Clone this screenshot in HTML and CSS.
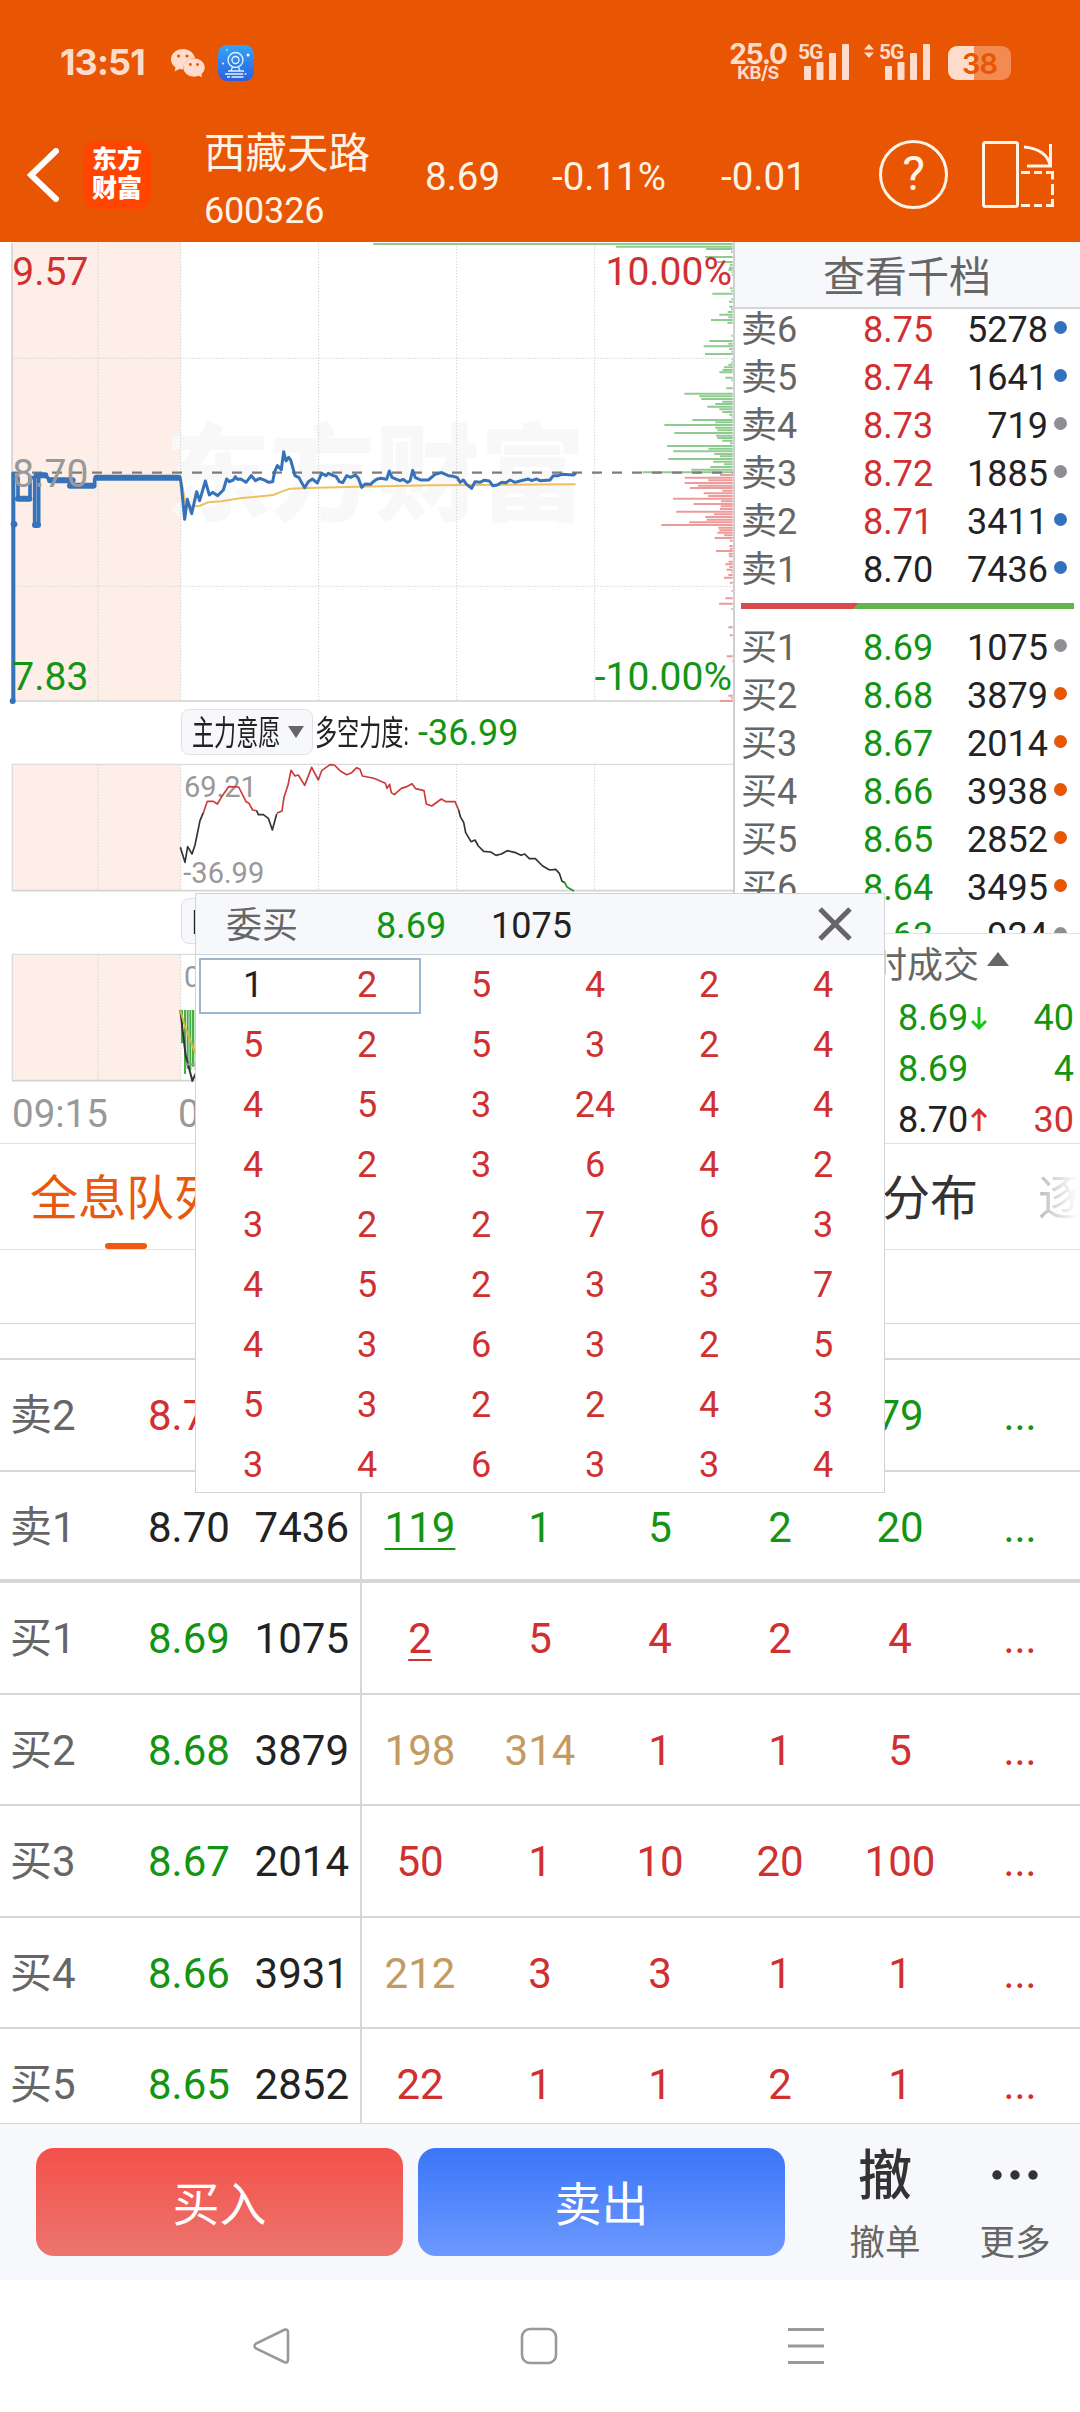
FILE: index.html
```html
<!DOCTYPE html>
<html lang="zh-CN">
<head>
    <meta charset="UTF-8">
    <meta name="viewport" content="width=device-width, initial-scale=1.0">
    <title>西藏天路 600326</title>
    <link rel="stylesheet" href="styles.css">
</head>
<body>
<div class="page">

    <!-- Status bar -->
    <div class="status-bar">
        <span class="clock">13:51</span>
        <svg class="wechat" viewBox="0 0 34 28" width="34" height="28">
            <path fill="#fddccb" d="M12 0C5.4 0 0 4.7 0 10.4c0 3.3 1.8 6 4.5 8L3.6 22.600l4.700-2.500c1.300.300 2.400.500 3.700.500C12 14 17 9 24 9 22.800 3.800 17.900 0 12 0z"/>
            <ellipse cx="23" cy="18.500" rx="10.800" ry="9.200" fill="#fddccb"/>
            <path fill="#fddccb" d="M26 26l5 2.200-.900-4.500z"/>
            <g fill="#e85503"><circle cx="7.600" cy="7" r="1.600"/><circle cx="16" cy="7" r="1.600"/><circle cx="19.400" cy="15.500" r="1.400"/><circle cx="26.600" cy="15.500" r="1.400"/></g>
        </svg>
        <svg class="cam" viewBox="0 0 36 36" width="36" height="36">
            <defs><linearGradient id="camBg" x1="0" y1="0" x2="0" y2="1"><stop offset="0" stop-color="#35a5f5"/><stop offset="1" stop-color="#2b5fe0"/></linearGradient></defs>
            <rect width="36" height="36" rx="9" fill="url(#camBg)"/>
            <g fill="none" stroke="#e6f3ff" stroke-width="1.300"><circle cx="17.500" cy="15" r="7.500"/><circle cx="17.500" cy="15" r="3.500"/><path d="M14.500 22l-1.500 4h9l-1.500-4M10 26h16M7 29h18M26.500 29h2M9 32h3M13.500 32h12"/></g>
            <g fill="#fff"><circle cx="30" cy="10" r="1.500"/><circle cx="9" cy="5" r=".8"/><circle cx="5" cy="18.500" r=".9"/></g>
        </svg>
        <div class="net-speed"><b>25.0</b><small>KB/S</small></div>
        <div class="signal">
            <span>5G</span>
            <svg viewBox="0 0 46 36" width="46" height="36"><g fill="#fddccb"><rect x="0" y="22" width="7" height="14" rx="1"/><rect x="12.500" y="18" width="7" height="18" rx="1"/><rect x="25" y="9" width="7" height="27" rx="1"/><rect x="38" y="0" width="7" height="36" rx="1"/></g></svg>
        </div>
        <svg class="updown" viewBox="0 0 10 14" width="10" height="14"><path fill="#fddccb" d="M5 0l5 5.500H0zM5 14L0 8.500h10z"/></svg>
        <div class="signal second">
            <span>5G</span>
            <svg viewBox="0 0 46 36" width="46" height="36"><g fill="#fddccb"><rect x="0" y="22" width="7" height="14" rx="1"/><rect x="12.500" y="18" width="7" height="18" rx="1"/><rect x="25" y="9" width="7" height="27" rx="1"/><rect x="38" y="0" width="7" height="36" rx="1"/></g></svg>
        </div>
        <div class="battery">38</div>
    </div>

    <!-- Title bar -->
    <div class="title-bar">
        <svg class="back" viewBox="0 0 32 54" width="32" height="54"><path d="M29 3L4 27l25 24" fill="none" stroke="#fff" stroke-width="6" stroke-linecap="round"/></svg>
        <div class="brand">东方<br>财富</div>
        <div class="stock">
            <div class="stock-name">西藏天路</div>
            <div class="stock-code">600326</div>
        </div>
        <span class="quote price">8.69</span>
        <span class="quote percent">-0.11%</span>
        <span class="quote change">-0.01</span>
        <div class="help">?</div>
        <svg class="rotate" viewBox="0 0 74 68" width="74" height="68">
            <g fill="none" stroke="#fff3e6" stroke-width="3">
                <rect x="1.500" y="1.500" width="34" height="64" rx="2"/>
                <path d="M42 6c14 1 25 8 26 19M68.500 3v22H45"/>
                <path d="M39 31.500h9M52 31.500h8M64 31.500h6.500v7M70.500 43v11M70.500 58v6.500H64M60 64.500h-8M48 64.500h-9"/>
            </g>
        </svg>
    </div>

    <div class="main">
        <!-- Charts -->
        <div class="charts">
            <svg class="chart" viewBox="0 21 2202 1386" width="734" height="462">
                <rect x="37" y="21" width="505" height="1376" fill="#fdeee7"/>
                <text class="watermark" x="495" y="830">东方财富</text>
                <g class="grid">
                    <path d="M294 24V1396M542 24V1396M956 24V1396M1370 24V1396M1784 24V1396M37 370H2200M37 1054H2200"/>
                </g>
                <path d="M36 24V1398M36 1398H2202" stroke="#d3d3d5" stroke-width="5" fill="none"/>
                <path id="volUp" stroke="#8fca90" stroke-width="6" fill="none"/>
                <path id="volDown" stroke="#ec9a9a" stroke-width="6" fill="none"/>
                <path d="M36 713H2198" stroke="#7d7d7d" stroke-width="7" stroke-dasharray="30 30" fill="none"/>
                <polyline fill="none" stroke="#efc05f" stroke-width="6" points="545,740 555,800 575,815 600,812 625,802 665,799 720,790 820,780 845,770 870,761 950,758 1140,754 1300,751 1727,748"/>
                <g fill="none" stroke="#3672b9">
                    <path stroke-width="12" d="M40 712V1398"/>
                    <circle cx="38" cy="1398" r="9" fill="#3672b9" stroke="none"/>
                    <circle cx="42" cy="868" r="10" fill="#3672b9" stroke="none"/>
                    <path stroke-width="11" stroke-linejoin="round" d="M46 728H54V790H90V728H104V870H116V720H135L150 736H210V752H284V730"/>
                    <path stroke-width="18" stroke-linecap="round" d="M54 791H88M105 870H114M110 721H136M150 736H218M210 752H280M289 728H536"/>
                    <polyline stroke-width="9" stroke-linejoin="round" points="541,730 545,760 554,853 562,793 575,836 590,770 599,797 616,738 628,780 638,772 653,782 670,765 680,732 688,740 700,735 706,725 712,733 722,732 738,742 754,722 766,737 780,730 795,736 806,742 818,740 824,710 832,692 844,704 851,650 858,678 866,667 872,675 885,722 897,728 906,745 914,758 925,740 937,732 952,744 965,715 978,722 985,715 1000,722 1008,724 1018,740 1028,743 1040,722 1052,727 1066,720 1075,730 1085,757 1095,747 1112,748 1120,740 1130,733 1143,730 1160,733 1168,708 1176,727 1190,733 1200,737 1210,733 1222,742 1230,738 1238,706 1246,728 1262,735 1285,735 1305,718 1325,713 1345,722 1360,724 1372,728 1380,742 1390,735 1400,748 1415,760 1425,740 1440,742 1452,736 1468,738 1478,752 1492,750 1505,742 1518,743 1530,735 1545,742 1560,738 1585,732 1595,737 1610,732 1620,737 1650,735 1660,722 1675,722 1685,718 1720,720 1728,715"/>
                </g>
                <text class="axis-text up" x="37" y="150">9.57</text>
                <text class="axis-text up" x="2196" y="150" text-anchor="end">10.00%</text>
                <text class="axis-text mid" x="37" y="756">8.70</text>
                <text class="axis-text down" x="37" y="1365">7.83</text>
                <text class="axis-text down" x="2196" y="1365" text-anchor="end">-10.00%</text>
            </svg>

            <div class="legend">
                <div class="picker"><span class="narrow">主力意愿</span><i></i></div>
                <span class="narrow force">多空力度:</span>
                <span class="force-value">-36.99</span>
            </div>

            <svg class="chart" viewBox="0 210 2202 396" width="734" height="132">
                <rect x="37" y="223" width="505" height="378" fill="#fdeee7"/>
                <g class="grid"><path d="M294 224V602M542 224V602M956 224V602M1370 224V602M1784 224V602"/></g>
                <path d="M2202 223H37V603" stroke="#dcdcde" stroke-width="4" fill="none"/>
                <path d="M36 602H2202" stroke="#d3d3d5" stroke-width="5" fill="none"/>
                <text class="small-text" x="552" y="320">69.21</text>
                <text class="small-text" x="550" y="578">-36.99</text>
                <g fill="none" stroke-width="5" stroke-linejoin="round">
                    <polyline stroke="#333" points="541,472 555,517 563,470 576,492 585,465 600,392 610,368"/>
                    <polyline stroke="#cb3b3b" points="610,368 622,334 640,334 652,342 664,322 686,290 716,291 738,335 747,340 758,360 770,362"/>
                    <polyline stroke="#333" points="770,362 775,374 790,374 805,385 817,420 830,372"/>
                    <polyline stroke="#cb3b3b" points="830,370 846,363 852,322 864,285 873,241 885,258 895,255 914,286 935,232 955,270 965,242 990,224 1003,225 1020,242 1040,254 1055,248 1070,233 1080,238 1087,258 1118,264 1129,268 1156,280 1161,295 1169,283 1174,308 1183,314 1204,295 1220,290 1236,281 1247,296 1272,302 1279,342 1295,348 1324,327 1338,335 1365,335 1376,360"/>
                    <polyline stroke="#333" points="1376,360 1381,380 1391,397 1397,428 1413,455 1425,450 1435,468 1451,484 1472,486 1488,496 1504,492 1522,482 1547,488 1563,496 1574,492 1588,506 1606,506 1628,528 1649,540 1667,538 1678,550 1686,574 1695,578"/>
                    <polyline stroke="#1c961c" points="1693,576 1702,592 1722,603"/>
                </g>
            </svg>

            <div class="legend second">
                <div class="picker"><span class="narrow">MACD</span></div>
            </div>

            <svg class="chart" viewBox="0 780 2202 396" width="734" height="132">
                <rect x="37" y="793" width="505" height="378" fill="#fdeee7"/>
                <g class="grid"><path d="M294 794V1172M542 794V1172"/></g>
                <path d="M2202 793H37V1173" stroke="#dcdcde" stroke-width="4" fill="none"/>
                <path d="M36 1172H2202" stroke="#d3d3d5" stroke-width="5" fill="none"/>
                <path d="M546 960V1060M555 960V1152M563 960V1136M571 960V1140M579 960V1130M587 960V1140" stroke="#48ae48" stroke-width="6"/>
                <path d="M541 960l8 70 8 66 20 76 12-25" fill="none" stroke="#333" stroke-width="6"/>
                <path d="M541 960l14 50 34 86" fill="none" stroke="#d9b93a" stroke-width="6"/>
                <path d="M556 1123h30" stroke="#999" stroke-width="6"/>
                <text class="small-text" x="552" y="890">0</text>
            </svg>

            <div class="times"><span>09:15</span><span>09:30</span></div>
        </div>

        <!-- Order book -->
        <div class="side">
            <div class="side-head">查看千档</div>
            <div class="book">
                <div class="book-row first"><span>卖6</span><b class="up">8.75</b><em>5278</em><i class="dot blue"></i></div>
                <div class="book-row"><span>卖5</span><b class="up">8.74</b><em>1641</em><i class="dot blue"></i></div>
                <div class="book-row"><span>卖4</span><b class="up">8.73</b><em>719</em><i class="dot"></i></div>
                <div class="book-row"><span>卖3</span><b class="up">8.72</b><em>1885</em><i class="dot"></i></div>
                <div class="book-row"><span>卖2</span><b class="up">8.71</b><em>3411</em><i class="dot blue"></i></div>
                <div class="book-row"><span>卖1</span><b>8.70</b><em>7436</em><i class="dot blue"></i></div>
                <div class="ratio"></div>
                <div class="book-row"><span>买1</span><b class="down">8.69</b><em>1075</em><i class="dot"></i></div>
                <div class="book-row"><span>买2</span><b class="down">8.68</b><em>3879</em><i class="dot orange"></i></div>
                <div class="book-row"><span>买3</span><b class="down">8.67</b><em>2014</em><i class="dot orange"></i></div>
                <div class="book-row"><span>买4</span><b class="down">8.66</b><em>3938</em><i class="dot orange"></i></div>
                <div class="book-row"><span>买5</span><b class="down">8.65</b><em>2852</em><i class="dot orange"></i></div>
                <div class="book-row"><span>买6</span><b class="down">8.64</b><em>3495</em><i class="dot orange"></i></div>
                <div class="book-row"><span></span><b class="down">8.63</b><em>924</em><i class="dot"></i></div>
            </div>
            <div class="deals-head">时成交<i></i></div>
            <div class="deal down"><span>8.69</span><svg viewBox="0 0 16 24" width="16" height="24"><path d="M8 1v21M1 15l7 7 7-7" fill="none" stroke="#15c715" stroke-width="3"/></svg><em>40</em></div>
            <div class="deal down"><span>8.69</span><em>4</em></div>
            <div class="deal up"><span class="flat">8.70</span><svg viewBox="0 0 16 24" width="16" height="24"><path d="M8 23V2M1 9l7-7 7 7" fill="none" stroke="#dd2c2c" stroke-width="3"/></svg><em>30</em></div>
        </div>
    </div>

    <!-- Tabs -->
    <div class="tabs">
        <span class="tab active">全息队列</span>
        <span class="tab spread">分布</span>
        <span class="tab fade">逐</span>
    </div>
    <div class="blank"></div>
    <div class="blank short"></div>

    <!-- Order queue -->
    <div class="queue">
        <div class="queue-row sell">
            <div class="level"><span>卖2</span><b class="up">8.71</b><em>3411</em></div>
            <div class="cells"><span></span><span></span><span></span><span></span><span>79</span><span>...</span></div>
        </div>
        <div class="queue-row sell last">
            <div class="level"><span>卖1</span><b>8.70</b><em>7436</em></div>
            <div class="cells"><span><u>119</u></span><span>1</span><span>5</span><span>2</span><span>20</span><span>...</span></div>
        </div>
        <div class="queue-row buy">
            <div class="level"><span>买1</span><b class="down">8.69</b><em>1075</em></div>
            <div class="cells"><span><u>2</u></span><span>5</span><span>4</span><span>2</span><span>4</span><span>...</span></div>
        </div>
        <div class="queue-row buy">
            <div class="level"><span>买2</span><b class="down">8.68</b><em>3879</em></div>
            <div class="cells"><span class="big">198</span><span class="big">314</span><span>1</span><span>1</span><span>5</span><span>...</span></div>
        </div>
        <div class="queue-row buy">
            <div class="level"><span>买3</span><b class="down">8.67</b><em>2014</em></div>
            <div class="cells"><span>50</span><span>1</span><span>10</span><span>20</span><span>100</span><span>...</span></div>
        </div>
        <div class="queue-row buy">
            <div class="level"><span>买4</span><b class="down">8.66</b><em>3931</em></div>
            <div class="cells"><span class="big">212</span><span>3</span><span>3</span><span>1</span><span>1</span><span>...</span></div>
        </div>
        <div class="queue-row buy">
            <div class="level"><span>买5</span><b class="down">8.65</b><em>2852</em></div>
            <div class="cells"><span>22</span><span>1</span><span>1</span><span>2</span><span>1</span><span>...</span></div>
        </div>
    </div>

    <!-- Trade bar -->
    <div class="trade-bar">
        <button class="btn buy-btn">买入</button>
        <button class="btn sell-btn">卖出</button>
        <div class="action cancel"><strong>撤</strong><span>撤单</span></div>
        <div class="action more">
            <svg viewBox="0 0 46 54" width="46" height="54"><g fill="#333"><circle cx="5" cy="27" r="4.700"/><circle cx="23" cy="27" r="4.700"/><circle cx="41" cy="27" r="4.700"/></g></svg>
            <span>更多</span>
        </div>
    </div>

    <!-- System navigation -->
    <div class="nav">
        <svg viewBox="0 0 38 38" width="38" height="38"><path d="M33 2.500L4 16.500q-3 2.500 0 5L33 35.500q3 .500 3-3v-27q0-3.500-3-3z" fill="none" stroke="#999" stroke-width="2.600"/></svg>
        <svg viewBox="0 0 38 38" width="38" height="38"><rect x="2" y="2" width="34" height="34" rx="8" fill="none" stroke="#999" stroke-width="2.600"/></svg>
        <svg viewBox="0 0 38 38" width="38" height="38"><path d="M0 2.500h36M0 19h36M0 35.500h36" stroke="#999" stroke-width="3"/></svg>
    </div>

    <!-- Queue detail popup -->
    <div class="popup">
        <div class="popup-head">
            <span>委买</span><b class="down">8.69</b><em>1075</em>
            <svg viewBox="0 0 34 34" width="34" height="34"><path d="M2 2l30 30M32 2L2 32" stroke="#666" stroke-width="5"/></svg>
        </div>
        <div class="popup-grid">
            <span class="mine">1</span><span>2</span><span>5</span><span>4</span><span>2</span><span>4</span>
            <span>5</span><span>2</span><span>5</span><span>3</span><span>2</span><span>4</span>
            <span>4</span><span>5</span><span>3</span><span>24</span><span>4</span><span>4</span>
            <span>4</span><span>2</span><span>3</span><span>6</span><span>4</span><span>2</span>
            <span>3</span><span>2</span><span>2</span><span>7</span><span>6</span><span>3</span>
            <span>4</span><span>5</span><span>2</span><span>3</span><span>3</span><span>7</span>
            <span>4</span><span>3</span><span>6</span><span>3</span><span>2</span><span>5</span>
            <span>5</span><span>3</span><span>2</span><span>2</span><span>4</span><span>3</span>
            <span>3</span><span>4</span><span>6</span><span>3</span><span>3</span><span>4</span>
        </div>
        <div class="selection"></div>
    </div>
</div>

<script>
    // volume by price: [y, bar length]
    const up = [[27,1078],[35,350],[42,80],[50,5],[66,83],[81,48],[90,8],[98,11],[104,13],[112,3],[120,3],[160,8],[168,4],[176,61],
        [192,4],[200,11],[215,10],[223,5],[231,15],[239,40],[247,13],[255,65],[263,16],[302,4],[318,70],[326,13],[334,87],[342,10],
        [350,4],[357,83],[373,3],[382,4],[389,13],[397,26],[405,31],[412,40],[428,22],[436,4],[460,19],[476,145],[484,100],[492,94],
        [500,31],[507,52],[515,76],[523,40],[531,31],[539,10],[547,3],[555,121],[562,52],[570,205],[578,52],[586,46],[594,175],
        [602,50],[609,46],[617,31],[625,8],[633,197],[641,73],[649,178],[657,55],[664,38],[672,193],[680,58],[688,26],[696,67],
        [704,124],[712,270]];
    const down = [[720,38],[728,144],[736,73],[744,144],[752,104],[759,128],[767,31],[775,87],[783,73],[791,179],[799,35],[807,117],
        [814,36],[822,38],[830,169],[838,56],[846,82],[854,78],[862,130],[870,214],[878,43],[886,40],[893,46],[901,26],[909,54],
        [917,8],[933,10],[941,8],[948,50],[956,12],[964,11],[980,12],[988,22],[996,10],[1004,18],[1012,4],[1020,13],[1028,26],
        [1043,8],[1067,4],[1090,22],[1106,41],[1122,4],[1177,13],[1201,9],[1264,18],[1279,2],[1382,13],[1390,5],[1398,38]];
    const bars = list => list.map(([y, len]) => `M2198 ${y}h-${len}`).join('');
    document.getElementById('volUp').setAttribute('d', bars(up));
    document.getElementById('volDown').setAttribute('d', bars(down));
</script>
</body>
</html>
```
FILE: styles.css
```css
* {
    box-sizing: border-box;
}

body {
    margin: 0;
    background: #fff;
    font-family: Roboto, "Noto Sans CJK SC", sans-serif;
    color: #222;
}

b, em, i, u {
    font-weight: normal;
    font-style: normal;
}

.page {
    position: relative;
    width: 1080px;
    height: 2412px;
    overflow: hidden;
}

.up { color: #d03030; }
.down { color: #139513; }

/* status bar */
.status-bar {
    display: flex;
    height: 108px;
    padding: 44px 67px 0 60px;
    background: #e85503;
    color: #fddccb;
    font-family: Inter, sans-serif;
}

.clock {
    width: 111px;
    font-size: 36px;
    font-weight: 700;
    line-height: 36px;
    letter-spacing: -0.9px;
}

.wechat {
    margin-top: 5px;
}

.cam {
    margin: 1px 0 0 13px;
}

.net-speed {
    display: flex;
    flex-direction: column;
    width: 62px;
    margin-left: 473px;
    align-items: center;
}

.net-speed b {
    font-size: 28px;
    font-weight: 700;
    line-height: 20px;
    letter-spacing: -1.2px;
}

.net-speed small {
    font-size: 18px;
    font-weight: 700;
    line-height: 18px;
    letter-spacing: -0.5px;
}

.signal {
    position: relative;
    margin-left: 15px;
}

.signal.second {
    margin-left: 11px;
}

.signal span {
    position: absolute;
    left: -6px;
    top: -1px;
    font: 700 21px/18px Roboto, sans-serif;
    letter-spacing: -1px;
}

.updown {
    margin-left: 14px;
}

.battery {
    width: 63px;
    height: 34px;
    margin: 2px 0 0 17px;
    border-radius: 9px;
    background: linear-gradient(90deg, #fddccb 26px, #f38a52 26px);
    color: #e85503;
    font-size: 29px;
    font-weight: 600;
    line-height: 35px;
    text-align: center;
    letter-spacing: -1px;
}

/* title bar */
.title-bar {
    display: flex;
    height: 134px;
    padding: 0 24px 0 27px;
    background: #e85503;
    color: #fff3e6;
}

.back {
    margin-top: 40px;
}

.brand {
    width: 68px;
    height: 68px;
    margin: 33px 0 0 24px;
    padding-top: 4px;
    border-radius: 14px;
    background: #ff4500;
    color: #fff;
    font-size: 25px;
    font-weight: 900;
    line-height: 29px;
    text-align: center;
}

.stock {
    width: 221px;
    margin: 20px 0 0 53px;
}

.stock-name {
    font-size: 41.5px;
    line-height: 52px;
}

.stock-code {
    font-size: 36px;
    line-height: 40px;
    margin-top: 11px;
    letter-spacing: -0.2px;
}

.quote {
    font-size: 38.5px;
    line-height: 40px;
    margin-top: 49px;
}

.price { width: 127px; }
.percent { width: 169px; }
.change { width: 158px; }

.help {
    width: 69px;
    height: 69px;
    margin-top: 32px;
    border: 3px solid #fff3e6;
    border-radius: 50%;
    font-size: 48px;
    line-height: 62px;
    text-align: center;
}

.rotate {
    margin: 33px 0 0 34px;
}

/* charts */
.main {
    display: flex;
    height: 902px;
    border-bottom: 1px solid #dfe1e3;
}

.charts {
    width: 733px;
}

.chart {
    display: block;
}

.grid path {
    fill: none;
    stroke: #d2d2d2;
    stroke-width: 3;
    stroke-dasharray: 4 5;
}

.watermark {
    font-size: 315px;
    font-weight: 900;
    fill: #f8f8f8;
}

.axis-text {
    font-size: 117px;
}

.axis-text.up { fill: #d03030; }
.axis-text.mid { fill: #999; }
.axis-text.down { fill: #139513; }

.small-text {
    font-size: 87px;
    fill: #999;
}

.legend {
    display: flex;
    align-items: center;
    height: 56px;
    padding-left: 181px;
}

.legend.second {
    height: 58px;
}

.picker {
    display: flex;
    align-items: center;
    width: 132px;
    height: 46px;
    padding-left: 10px;
    border: 1px solid #e0e2e6;
    border-radius: 8px;
    background: #f7f8fb;
}

.picker i {
    border: 8px solid transparent;
    border-top: 12px solid #666;
    border-bottom: 0;
    margin-left: 8px;
}

/* horizontally squeezed captions */
.narrow {
    width: 88px;
    font-size: 34px;
    line-height: 44px;
    padding-top: 2px;
    white-space: nowrap;
    transform: scaleX(0.65);
    transform-origin: left;
}

.force {
    width: 101px;
    margin-left: 2px;
}

.force-value {
    margin-left: 2px;
    padding-top: 2px;
    font-size: 36px;
    color: #139513;
}

.times {
    display: flex;
    height: 61px;
    padding-left: 12px;
    color: #999;
    font-size: 38.5px;
    line-height: 64px;
}

.times span {
    width: 166px;
}

/* order book */
.side {
    width: 347px;
    border-left: 2px solid #cfcfd2;
}

.side-head {
    height: 67px;
    border-bottom: 2px solid #d5d6da;
    background: #f7f8fb;
    color: #666;
    font-size: 42px;
    line-height: 72px;
    text-align: center;
    padding-right: 1px;
}

.book {
    height: 625px;
    overflow: hidden;
    border-bottom: 1px solid #dfe1e3;
}

.book-row {
    display: flex;
    height: 48px;
    padding-left: 6px;
    font-size: 36px;
    line-height: 49px;
}

.book-row.first {
    margin-top: -3px;
}

.book-row span {
    width: 122px;
    color: #666;
}

.book-row b {
    width: 70px;
}

.book-row em {
    width: 115px;
    text-align: right;
}

.dot {
    width: 13px;
    height: 13px;
    margin: 15px 0 0 6px;
    border-radius: 50%;
    background: #8e8e93;
}

.dot.blue { background: #3173bf; }
.dot.orange { background: #e85503; }

.ratio {
    width: 333px;
    height: 6px;
    margin: 9px 0 15px 6px;
    background: linear-gradient(135deg, #dc4b4b 83px, #63b54d 83px);
}

.deals-head {
    display: flex;
    align-items: center;
    height: 58px;
    padding: 0 0 2px 136px;
    color: #666;
    font-size: 36px;
}

.deals-head i {
    border: 11px solid transparent;
    border-bottom: 14px solid #666;
    border-top: 0;
    margin: -6px 0 0 8px;
}

.deal {
    display: flex;
    align-items: center;
    height: 51px;
    padding: 0 6px 0 163px;
    font-size: 36px;
}

.deal svg {
    margin-left: 3px;
}

.deal em {
    margin-left: auto;
}

.flat {
    color: #222;
}

/* tabs */
.tabs {
    display: flex;
    height: 106px;
    padding-left: 30px;
    border-bottom: 1px solid #dfe1e3;
    font-size: 48px;
    line-height: 110px;
    white-space: nowrap;
}

.tab {
    color: #333;
}

.tab.active {
    position: relative;
    width: 192px;
    color: #e8590f;
}

.tab.active::after {
    content: "";
    position: absolute;
    left: 75px;
    bottom: 0;
    width: 42px;
    height: 6px;
    border-radius: 3px;
    background: #ee5a10;
}

.tab.spread {
    margin-left: 660px;
}

.tab.fade {
    width: 42px;
    margin-left: 60px;
    overflow: hidden;
    background: linear-gradient(90deg, #bbb, #fff 95%);
    -webkit-background-clip: text;
    background-clip: text;
    color: transparent;
}

.blank {
    height: 74px;
    border-bottom: 1px solid #d5d8db;
}

.blank.short {
    height: 36px;
    border-bottom-width: 2px;
}

/* order queue */
.queue {
    height: 763px;
    overflow: hidden;
}

.queue-row {
    display: flex;
    height: 111.5px;
    border-bottom: 2px solid #d5d8db;
    font-size: 42px;
    line-height: 111px;
}

.queue-row.last {
    border-bottom-width: 4px;
}

.level {
    display: flex;
    width: 362px;
    padding-left: 10px;
    border-right: 2px solid #d5d8db;
}

.level span {
    width: 138px;
    color: #666;
}

.level b {
    width: 82px;
}

.level em {
    width: 119px;
    text-align: right;
}

.cells {
    display: grid;
    grid-template-columns: repeat(6, 120px);
    width: 718px;
    margin-left: -2px;
    text-align: center;
}

.cells u {
    text-decoration-thickness: 2px;
    text-underline-offset: 6px;
}

.sell .cells { color: #139513; }
.buy .cells { color: #d03030; }
.cells .big { color: #c39a60; }

/* trade bar */
.trade-bar {
    display: flex;
    height: 157px;
    padding: 24px 0 0 36px;
    border-top: 1px solid #d5d8db;
    background: #f7f8fb;
}

.btn {
    width: 367px;
    height: 108px;
    margin-right: 15px;
    padding: 0 0 4px;
    border: 0;
    border-radius: 18px;
    color: #fff;
    font: 47px Roboto, "Noto Sans CJK SC", sans-serif;
}

.buy-btn {
    background: linear-gradient(#f3514a, #ec746e);
}

.sell-btn {
    background: linear-gradient(#3a76f8, #6d99ff);
}

.action {
    display: flex;
    flex-direction: column;
    align-items: center;
    width: 130px;
    color: #666;
    font-size: 35.5px;
    line-height: 46px;
}

.action strong {
    height: 72px;
    color: #333;
    font-size: 54px;
    font-weight: 500;
    line-height: 57px;
}

.cancel {
    margin-left: 20px;
}

.more svg {
    margin-bottom: 18px;
}

/* system navigation */
.nav {
    display: flex;
    height: 132px;
    padding: 47px 0 0 252px;
    gap: 230px;
}

/* popup */
.popup {
    position: absolute;
    left: 195px;
    top: 893px;
    width: 690px;
    height: 600px;
    border: 1px solid #d0d3d7;
    background: #fff;
}

.popup-head {
    display: flex;
    height: 61px;
    padding-left: 30px;
    border-bottom: 1px solid #d0d3d7;
    background: #f7f8fb;
    font-size: 36px;
    line-height: 64px;
}

.popup-head span {
    width: 150px;
    color: #666;
}

.popup-head b {
    width: 115px;
}

.popup-head em {
    width: 130px;
}

.popup-head svg {
    margin: 13px 0 0 197px;
}

.popup-grid {
    display: grid;
    grid-template-columns: repeat(6, 114px);
    grid-auto-rows: 60px;
    font-size: 36px;
    line-height: 60px;
    text-align: center;
    color: #d03030;
}

.popup-grid .mine {
    color: #222;
}

.selection {
    position: absolute;
    left: 3px;
    top: 64px;
    width: 222px;
    height: 56px;
    border: 2px solid #9db5d0;
}
```
